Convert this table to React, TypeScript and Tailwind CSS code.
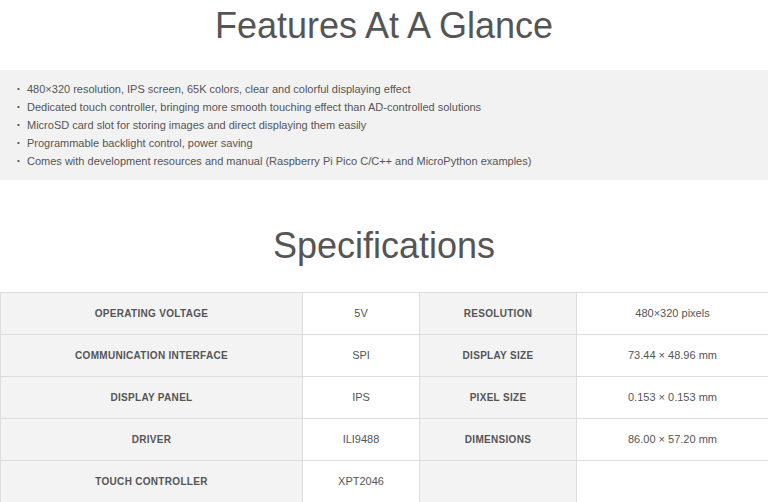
const features = [
  '480×320 resolution, IPS screen, 65K colors, clear and colorful displaying effect',
  'Dedicated touch controller, bringing more smooth touching effect than AD-controlled solutions',
  'MicroSD card slot for storing images and direct displaying them easily',
  'Programmable backlight control, power saving',
  'Comes with development resources and manual (Raspberry Pi Pico C/C++ and MicroPython examples)',
]

const specs: [string, string, string, string][] = [
  ['Operating voltage', '5V', 'Resolution', '480×320 pixels'],
  ['Communication interface', 'SPI', 'Display size', '73.44 × 48.96 mm'],
  ['Display panel', 'IPS', 'Pixel size', '0.153 × 0.153 mm'],
  ['Driver', 'ILI9488', 'Dimensions', '86.00 × 57.20 mm'],
  ['Touch controller', 'XPT2046', '', ''],
]

export default function App() {
  return (
    <div className="w-[768px] h-[502px] overflow-hidden bg-white text-[#555] font-['Liberation_Sans',Arial,sans-serif]">
      <h2 className="pt-[4px] text-center text-[36px] leading-[43px] text-[#555]">Features At A Glance</h2>

      <ul className="mt-[23px] bg-[#f2f2f2] pt-[10px] pb-[10px] pl-[17px] text-[11px] leading-[18px]">
        {features.map((f) => (
          <li key={f} className="flex items-start gap-[4px]">
            <span className="w-[6px] text-[8px]">•</span>
            <span>{f}</span>
          </li>
        ))}
      </ul>

      <h2 className="mt-[44px] text-center text-[36px] leading-[43px] text-[#555]">Specifications</h2>

      <table className="mt-[25px] w-[768px] border-collapse table-fixed text-[11px]">
        <colgroup>
          <col className="w-[302px]" />
          <col className="w-[117px]" />
          <col className="w-[157px]" />
          <col className="w-[192px]" />
        </colgroup>
        <tbody>
          {specs.map(([a, b, c, d], i) => (
            <tr key={i} className="h-[42px]">
              <SpecLabel text={a} />
              <SpecValue text={b} />
              <SpecLabel text={c} />
              <SpecValue text={d} />
            </tr>
          ))}
        </tbody>
      </table>
    </div>
  )
}

function SpecLabel({ text }: { text: string }) {
  return (
    <td className="border border-[#ddd] bg-[#f3f3f3] text-center align-middle text-[10px] font-bold uppercase tracking-[0.3px] text-[#555]">
      {text}
    </td>
  )
}

function SpecValue({ text }: { text: string }) {
  return <td className="border border-[#ddd] bg-white text-center align-middle text-[11px] text-[#555]">{text}</td>
}
